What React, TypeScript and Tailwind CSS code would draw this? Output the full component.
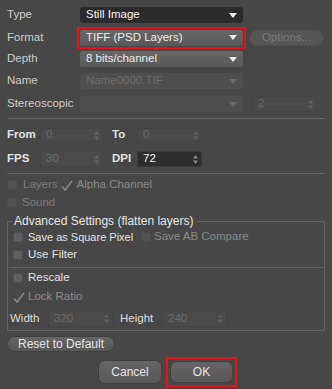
import clsx from "clsx";

// small drawings used by the controls
function Arrow({ dim }: { dim?: boolean }) {
  return (
    <svg width="8" height="5" viewBox="0 0 8 5" className="shrink-0">
      <path d="M0 0h8L4 5z" fill={dim ? "#6b6b6b" : "#ececec"} />
    </svg>
  );
}

function Spin({ light }: { light?: boolean }) {
  return (
    <svg width="5" height="9" viewBox="0 0 5 9" className="shrink-0">
      <path d="M2.5 0L5 3.5H0zM2.5 9L0 5.5h5z" fill={light ? "#8a8a8a" : "#626262"} />
    </svg>
  );
}

function Tick() {
  return (
    <svg width="12" height="11" viewBox="0 0 12 11" className="shrink-0">
      <path d="M1 6.5l3 3.5L11 1" fill="none" stroke="#868686" strokeWidth="1.6" />
    </svg>
  );
}

function Box({ off }: { off?: boolean }) {
  return (
    <span
      className={clsx(
        "block h-[10px] w-[10px] shrink-0 rounded-[2px] border",
        off ? "border-[#4c4c4c] bg-[#535353]" : "border-[#4e4e4e] bg-[#606060]"
      )}
    />
  );
}

type Tone = "dark" | "light" | "off";

function Select({ text, tone }: { text?: string; tone: Tone }) {
  return (
    <div
      className={clsx(
        "flex h-[16px] w-[163px] items-center justify-between rounded-[3px] pl-[6px] pr-[6px]",
        tone === "dark" && "bg-[#2b2b2b] text-[#f4f4f4]",
        tone === "light" && "bg-gradient-to-b from-[#676767] to-[#595959] text-[#ededed]",
        tone === "off" && "bg-[#4f4f4f] text-[#6e6e6e]"
      )}
    >
      <span>{text}</span>
      <Arrow dim={tone === "off"} />
    </div>
  );
}

function Field({ value, width, active }: { value: string; width: string; active?: boolean }) {
  return (
    <div
      className={clsx(
        "flex h-full items-center justify-between rounded-[2px] border pl-[5px] pr-[3px]",
        width,
        active ? "border-[#3a3a3a] bg-[#2e2e2e] text-[#f0f0f0]" : "border-[#434343] bg-[#4a4a4a] text-[#6c6c6c]"
      )}
    >
      <span>{value}</span>
      <Spin light={active} />
    </div>
  );
}

function Rule({ className }: { className?: string }) {
  return <div className={clsx("h-px bg-[#626262]", className)} />;
}

export default function App() {
  return (
    <div className="h-[389px] w-[332px] overflow-hidden bg-[#474747] font-['Liberation_Sans',Arial,sans-serif] text-[11.5px] leading-none text-[#cdcdcd]">
      <div className="flex flex-col pt-[7px]">
        {/* === TOP SELECTS === */}
        <div className="flex h-[16px] items-center">
          <span className="w-[80px] pl-[7px]">Type</span>
          <Select text="Still Image" tone="dark" />
        </div>

        <div className="mt-[4px] flex h-[21px] items-center">
          <span className="w-[77px] pl-[7px]">Format</span>
          <div className="border-2 border-[#e3121d] p-px">
            <Select text="TIFF (PSD Layers)" tone="light" />
          </div>
          <div className="ml-[3px] flex h-[16px] w-[75px] items-center justify-center rounded-[8px] border border-[#4f4f4f] bg-[#565656] text-[#7b7b7b]">
            Options...
          </div>
        </div>

        <div className="mt-[3px] flex h-[16px] items-center">
          <span className="w-[80px] pl-[7px]">Depth</span>
          <Select text="8 bits/channel" tone="light" />
        </div>

        <div className="mt-[6px] flex h-[16px] items-center">
          <span className="w-[80px] pl-[7px]">Name</span>
          <Select text="Name0000.TIF" tone="off" />
        </div>

        <div className="mt-[7px] flex h-[16px] items-center">
          <span className="w-[80px] pl-[7px]">Stereoscopic</span>
          <Select tone="off" />
          <div className="ml-[9px] h-full">
            <Field value="2" width="w-[65px]" />
          </div>
        </div>

        <Rule className="mx-[7px] mt-[6px]" />

        {/* === FRAMES === */}
        <div className="mt-[9px] flex h-[14px] items-center text-[#e2e2e2]">
          <span className="w-[40px] pl-[7px] font-bold">From</span>
          <Field value="0" width="w-[63px]" />
          <span className="ml-[9px] w-[25px] font-bold">To</span>
          <Field value="0" width="w-[65px]" />
        </div>

        <div className="mt-[9px] flex h-[16px] items-center text-[#e2e2e2]">
          <span className="w-[40px] pl-[7px] font-bold">FPS</span>
          <Field value="30" width="w-[63px]" />
          <span className="ml-[9px] w-[25px] font-bold">DPI</span>
          <Field value="72" width="w-[65px]" active />
        </div>

        <Rule className="mx-[7px] mt-[6px]" />

        {/* === CHANNELS === */}
        <div className="mt-[4px] flex h-[14px] items-center pl-[7px] text-[#7c7c7c]">
          <Box off />
          <span className="ml-[6px]">Layers</span>
          <span className="ml-[3px]">
            <Tick />
          </span>
          <span className="ml-[4px] text-[#8a8a8a]">Alpha Channel</span>
        </div>

        <div className="mt-[4px] flex h-[14px] items-center pl-[7px] text-[#7c7c7c]">
          <Box off />
          <span className="ml-[5px]">Sound</span>
        </div>

        {/* === ADVANCED GROUP === */}
        <fieldset className="ml-[7px] mt-[5px] w-[318px] border border-[#626262] px-[5px] pb-[3px]">
          <legend className="px-px pr-[4px] text-[12px] leading-[12px] text-[#e6e6e6]">
            Advanced Settings (flatten layers)
          </legend>

          <div className="mt-[3px] flex h-[14px] items-center text-[#e2e2e2]">
            <Box />
            <span className="ml-[5px] w-[113px] text-[11px]">Save as Square Pixel</span>
            <Box off />
            <span className="ml-[3px] text-[#8a8a8a]">Save AB Compare</span>
          </div>

          <div className="mt-[4px] flex h-[14px] items-center text-[#e2e2e2]">
            <Box />
            <span className="ml-[5px]">Use Filter</span>
          </div>

          <Rule className="-mx-[4px] mt-[5px]" />

          <div className="mt-[3px] flex h-[14px] items-center text-[#e2e2e2]">
            <Box />
            <span className="ml-[5px]">Rescale</span>
          </div>

          <div className="mt-[5px] flex h-[14px] items-center text-[#8a8a8a]">
            <Tick />
            <span className="ml-[3px]">Lock Ratio</span>
          </div>

          <div className="-ml-[3px] mt-[6px] flex h-[17px] items-center text-[#dcdcdc]">
            <span className="w-[38px]">Width</span>
            <Field value="320" width="w-[65px]" />
            <span className="ml-[7px] w-[42px]">Height</span>
            <Field value="240" width="w-[65px]" />
          </div>
        </fieldset>

        {/* === BUTTONS === */}
        <div className="ml-[7px] mt-[5px] flex h-[16px] w-[108px] items-center justify-center rounded-[8px] border border-[#3f3f3f] bg-gradient-to-b from-[#646464] to-[#575757] text-[12px] text-[#e4e4e4]">
          Reset to Default
        </div>

        <div className="mt-[5px] flex items-center">
          <div className="ml-[98px] flex h-[24px] w-[64px] items-center justify-center rounded-[7px] border border-[#3f3f3f] bg-gradient-to-b from-[#666666] to-[#585858] text-[12px] text-[#e6e6e6]">
            Cancel
          </div>
          <div className="ml-[4px] border-2 border-[#e3121d] p-[2px]">
            <div className="flex h-[22px] w-[63px] items-center justify-center rounded-[7px] border border-[#3f3f3f] bg-gradient-to-b from-[#666666] to-[#585858] text-[12px] text-[#e6e6e6]">
              OK
            </div>
          </div>
        </div>
      </div>
    </div>
  );
}
